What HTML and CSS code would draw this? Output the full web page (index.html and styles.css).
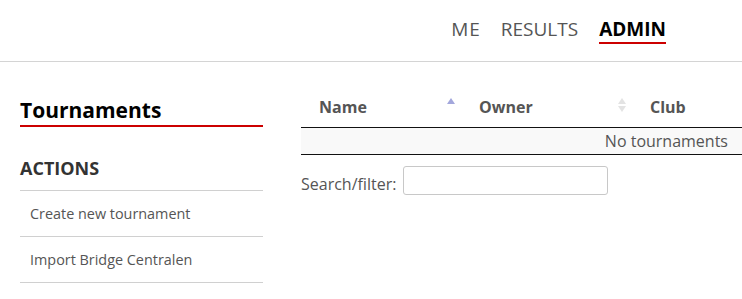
FILE: index.html
```html
<!DOCTYPE html>
<html lang="en">
<head>
    <meta charset="UTF-8">
    <meta name="viewport" content="width=device-width, initial-scale=1.0">
    <title>Tournaments</title>
    <link rel="stylesheet" href="styles.css">
</head>
<body>
    <header class="topbar">
        <nav class="menu">
            <a href="#" class="menu-item">ME</a>
            <a href="#" class="menu-item">RESULTS</a>
            <a href="#" class="menu-item active">ADMIN</a>
        </nav>
    </header>
    <main class="page">
        <aside class="sidebar">
            <h2 class="page-title">Tournaments</h2>
            <h3 class="side-title">ACTIONS</h3>
            <ul class="actions">
                <li><a href="#">Create new tournament</a></li>
                <li><a href="#">Import Bridge Centralen</a></li>
            </ul>
        </aside>
        <section class="content">
            <table class="grid">
                <thead>
                    <tr>
                        <th class="col-name sort-asc">Name</th>
                        <th class="col-owner sort-both">Owner</th>
                        <th class="col-club">Club</th>
                    </tr>
                </thead>
                <tbody>
                    <tr class="odd">
                        <td colspan="3" class="empty">No tournaments</td>
                    </tr>
                </tbody>
            </table>
            <div class="filter">
                <label for="search">Search/filter:</label>
                <input type="search" id="search" name="search">
            </div>
        </section>
    </main>
</body>
</html>
```

FILE: styles.css
```css
body {
    font-family: "Open Sans", "Liberation Sans", sans-serif;
    margin: 0;
    padding: 0;
    background-color: white;
    color: #555;
}
a {
    text-decoration: none;
    color: inherit;
}

/* top menu */
.topbar {
    border-bottom: 1px solid #d4d4d4;
    padding: 16px 76px 17px 0;
    display: flex;
    justify-content: flex-end;
}
.menu {
    display: flex;
    gap: 20px;
}
.menu-item {
    font-size: 19px;
    line-height: 26px;
    color: #555;
    border-bottom: 2px solid transparent;
}
.menu-item:first-child {
    letter-spacing: 1px;
}
.menu-item.active {
    color: #000;
    font-weight: bold;
    border-bottom-color: #cc0000;
    margin-left: 1px;
}

/* layout */
.page {
    display: grid;
    grid-template-columns: 243px 1fr;
    column-gap: 38px;
    padding-left: 20px;
}

/* left side */
.sidebar {
    padding-top: 33px;
}
.page-title {
    margin: 0;
    font-size: 21px;
    line-height: 30px;
    color: #000;
    border-bottom: 2px solid #cc0000;
}
.side-title {
    margin: 29px 0 0;
    padding-bottom: 10px;
    font-size: 18px;
    line-height: 24px;
    color: #333;
    border-bottom: 1px solid #d0d0d0;
}
.actions {
    list-style: none;
    margin: 0;
    padding: 0;
}
.actions li {
    border-bottom: 1px solid #d0d0d0;
}
.actions a {
    display: block;
    padding: 13px 10px 12px;
    font-size: 14.4px;
    line-height: 20px;
    color: #555;
}

/* right side */
.content {
    padding-top: 24px;
}
.grid {
    width: 100%;
    border-collapse: collapse;
    border-bottom: 1px solid #111;
}
.grid th {
    position: relative;
    text-align: left;
    padding: 10px 18px 9px;
    font-size: 16px;
    line-height: 22px;
    color: #555;
    border-bottom: 1px solid #111;
}
.col-name {
    width: 124px;
}
.col-owner {
    width: 135px;
}
.sort-asc::before,
.sort-both::before,
.sort-both::after {
    content: "";
    position: absolute;
    right: 6px;
    border-left: 4px solid transparent;
    border-right: 4px solid transparent;
}
.sort-asc::before {
    top: 12px;
    border-bottom: 6px solid #a3a7dc;
}
.sort-both::before {
    top: 12px;
    border-bottom: 6px solid #e3e3e3;
}
.sort-both::after {
    top: 20px;
    border-top: 6px solid #e3e3e3;
}
.grid td {
    padding: 4px 14px 4px 10px;
    font-size: 16px;
    line-height: 18px;
}
.grid tr.odd {
    background-color: #f9f9f9;
}
.grid td.empty {
    text-align: right;
}

.filter {
    display: flex;
    align-items: flex-start;
    gap: 7px;
    margin-top: 11px;
}
.filter label {
    margin-top: 7px;
    font-size: 16px;
    line-height: 22px;
    color: #555;
}
.filter input {
    width: 205px;
    height: 29px;
    box-sizing: border-box;
    padding: 4px;
    border: 1px solid #c8c8c8;
    border-radius: 3px;
    background: white;
}
```
